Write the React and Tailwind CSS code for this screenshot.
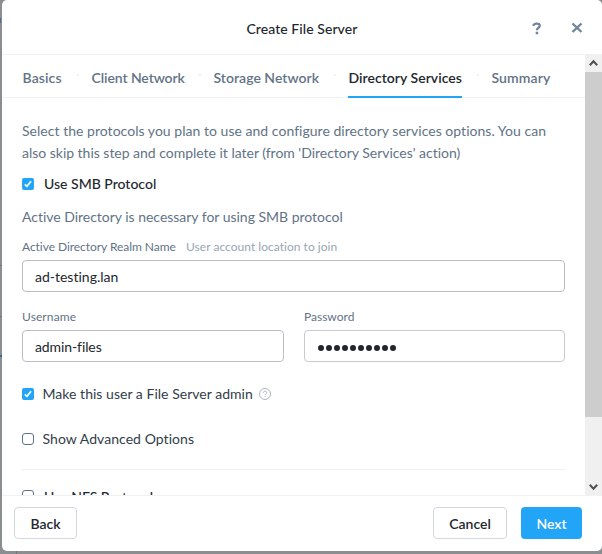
import React from 'react';

function Checkbox({ checked }) {
  return (
    <span
      className={
        checked
          ? 'flex h-3 w-3 shrink-0 items-center justify-center rounded-[2px] bg-[#22a5f7]'
          : 'flex h-3 w-3 shrink-0 rounded-[3px] border border-[#627386] bg-white'
      }
    >
      {checked && (
        <svg width="8" height="8" viewBox="0 0 8 8" fill="none" stroke="white" strokeWidth="1.7">
          <path d="M0.8 4.3 L3 6.3 L7.1 1.3" />
        </svg>
      )}
    </span>
  );
}

function Tab({ children, className, active }) {
  return (
    <div
      className={`h-[43px] shrink-0 whitespace-nowrap pl-[0.5px] text-[14px] leading-[45px] font-semibold ${
        active ? 'border-b-2 border-[#22a5f7] text-[#22272e]' : 'text-[#627386]'
      } ${className}`}
    >
      {children}
    </div>
  );
}

function Dot() {
  return <div className="mt-[19px] mr-3 ml-[15px] h-0.5 w-0.5 shrink-0 bg-[#f0f2f4]" />;
}

function Field({ children, border }) {
  return (
    <div className={`mt-[5px] flex h-8 items-center rounded-[4px] border bg-white pt-0.5 pl-3 text-[14px] leading-5 text-[#22272e] ${border}`}>
      {children}
    </div>
  );
}

export default function App() {
  return (
    <div className="flex h-[554px] w-[602px] overflow-hidden bg-[#8b8e91] font-['Lato',sans-serif] leading-5 [font-variant-ligatures:none]">
      <div className="flex w-0.5 shrink-0 flex-col">
        <div className="mt-[18px] h-[5px] w-px bg-[#4a6f9c]" />
        <div className="mt-[242px] h-px bg-[#74777a]" />
        <div className="mt-[50px] h-px bg-[#74777a]" />
        <div className="mt-[38px] h-0.5 bg-[#2a6f9f]" />
      </div>
      <div className="w-[600px] shrink-0">
        <div className="flex h-[551px] w-[600px] flex-col overflow-hidden rounded-[5px] bg-white">
          <header className="flex h-[55px] shrink-0 items-center border-b border-[#f0f1f3] pt-0.5">
            <h1 className="ml-[244.5px] w-[111.5px] whitespace-nowrap pt-px text-[14px] font-medium tracking-[0.06px] text-[#22272e]">
              Create File Server
            </h1>
            <svg className="ml-[174px]" width="10" height="13" viewBox="0 0 10 13" fill="none" stroke="#71859b" strokeWidth="2.3">
              <path d="M1.4 3.9 C1.6 0.9 8 0.7 7.8 3.8 C7.7 5.8 4.9 5.8 4.9 8.3" />
              <path d="M3.7 9.8 H6.2 V12.2 H3.7 Z" fill="#71859b" stroke="none" />
            </svg>
            <svg className="ml-[29px]" width="12" height="12" viewBox="0 0 12 12" stroke="#71859b" strokeWidth="2.4">
              <path d="M1.5 1.5 L10.5 10 M10.5 1.5 L1.5 10" />
            </svg>
          </header>

          <div className="flex h-[440px] shrink-0">
            <main className="h-full w-[583px] overflow-hidden">
              <nav className="flex h-[43px] border-b border-[#f0f1f3] pl-5">
                <Tab className="w-[40px] tracking-[0.12px]">Basics</Tab>
                <Dot />
                <Tab className="w-[93px] tracking-[-0.08px]">Client Network</Tab>
                <Dot />
                <Tab className="w-[106px] tracking-[0.03px]">Storage Network</Tab>
                <Dot />
                <Tab className="w-[114px] tracking-[0.03px]" active>Directory Services</Tab>
                <Dot />
                <Tab className="w-[60px] tracking-[0.1px]">Summary</Tab>
              </nav>

              <div className="px-5 pt-[22px] text-[14px] text-[#627386]">
                <p className="whitespace-nowrap leading-[22px]">
                  <span className="tracking-[0.03px]">
                    Select the protocols you plan to use and configure directory services options. You can
                  </span>
                  <br />
                  <span className="tracking-[-0.02px]">
                    also skip this step and complete it later (from 'Directory Services' action)
                  </span>
                </p>
                <div className="mt-2.5 flex h-5 items-center gap-2.5 font-medium text-[#22272e]">
                  <Checkbox checked />
                  <span>Use SMB Protocol</span>
                </div>
                <p className="mt-[13px] h-5 tracking-[-0.02px]">Active Directory is necessary for using SMB protocol</p>

                <div className="mt-3 flex h-4 text-[12px] leading-4">
                  <span className="w-[164px] whitespace-nowrap tracking-[-0.05px]">Active Directory Realm Name</span>
                  <span className="tracking-[0.03px] text-[#9aa5b5]">User account location to join</span>
                </div>
                <Field border="border-[#b8bfca]">ad-testing.lan</Field>

                <div className="mt-[17px] grid grid-cols-[262px_261px] gap-5">
                  <div>
                    <div className="h-4 text-[12px] leading-4 tracking-[0.1px]">Username</div>
                    <Field border="border-[#b8bfca]">
                      <span className="tracking-[-0.1px]">admin-files</span>
                    </Field>
                  </div>
                  <div>
                    <div className="h-4 text-[12px] leading-4">Password</div>
                    <Field border="border-[#c8cacf]">
                      <span className="flex gap-0.5 pt-0.5 pl-px">
                        {Array.from({ length: 10 }, (_, i) => (
                          <span key={i} className="h-1.5 w-1.5 rounded-full bg-[#22272e]" />
                        ))}
                      </span>
                    </Field>
                  </div>
                </div>

                <div className="mt-[22px] flex h-5 items-center text-[#323d49]">
                  <Checkbox checked />
                  <span className="ml-[8.5px] w-[210.5px] whitespace-nowrap tracking-[0.03px]">Make this user a File Server admin</span>
                  <svg className="ml-1.5" width="12" height="12" viewBox="0 0 12 12" fill="none" stroke="#a4aebb" strokeWidth="0.9">
                    <circle cx="6" cy="6" r="5.5" />
                    <path d="M4.3 4.8 C4.3 2.7 7.7 2.7 7.7 4.7 C7.7 5.9 6 5.8 6 7.2 M6 8.1 V9.1" />
                  </svg>
                </div>
                <div className="mt-[25px] flex h-5 items-center gap-[8.5px] text-[#323d49]">
                  <Checkbox />
                  <span className="tracking-[0.06px]">Show Advanced Options</span>
                </div>
                <div className="mt-5 h-px bg-[#f0f1f3]" />
                <div className="mt-4 flex h-5 items-center gap-2.5 font-medium text-[#22272e]">
                  <Checkbox />
                  <span className="pt-0.5 tracking-[0.03px]">Use NFS Protocol</span>
                </div>
              </div>
            </main>

            <div className="flex h-full w-[17px] shrink-0 flex-col bg-[#f0f0f0]">
              <svg width="17" height="17" viewBox="0 0 17 17" fill="none" stroke="#505050" strokeWidth="2">
                <path d="M4.8 10.3 L8.5 6.3 L12.2 10.3" />
              </svg>
              <div className="h-[345px] bg-[#cdcdcd]" />
              <svg className="mt-auto" width="17" height="17" viewBox="0 0 17 17" fill="none" stroke="#505050" strokeWidth="2">
                <path d="M4.8 6.7 L8.5 10.7 L12.2 6.7" />
              </svg>
            </div>
          </div>

          <footer className="flex grow items-start border-t border-[#f0f1f3] pt-[11px] pl-3 text-[14px] font-semibold text-[#22272e]">
            <button className="h-8 w-[63px] rounded-[4px] border border-[#d3d7e0] pt-0.5">Back</button>
            <button className="ml-[356px] h-8 w-[74px] rounded-[4px] border border-[#d3d7e0] pt-0.5">Cancel</button>
            <button className="ml-[14px] h-8 w-[61px] rounded-[4px] bg-[#22a5f7] pt-0.5 text-white">Next</button>
          </footer>
        </div>
        <div className="ml-[14px] h-[3px] w-px bg-[#74777a]" />
      </div>
    </div>
  );
}
